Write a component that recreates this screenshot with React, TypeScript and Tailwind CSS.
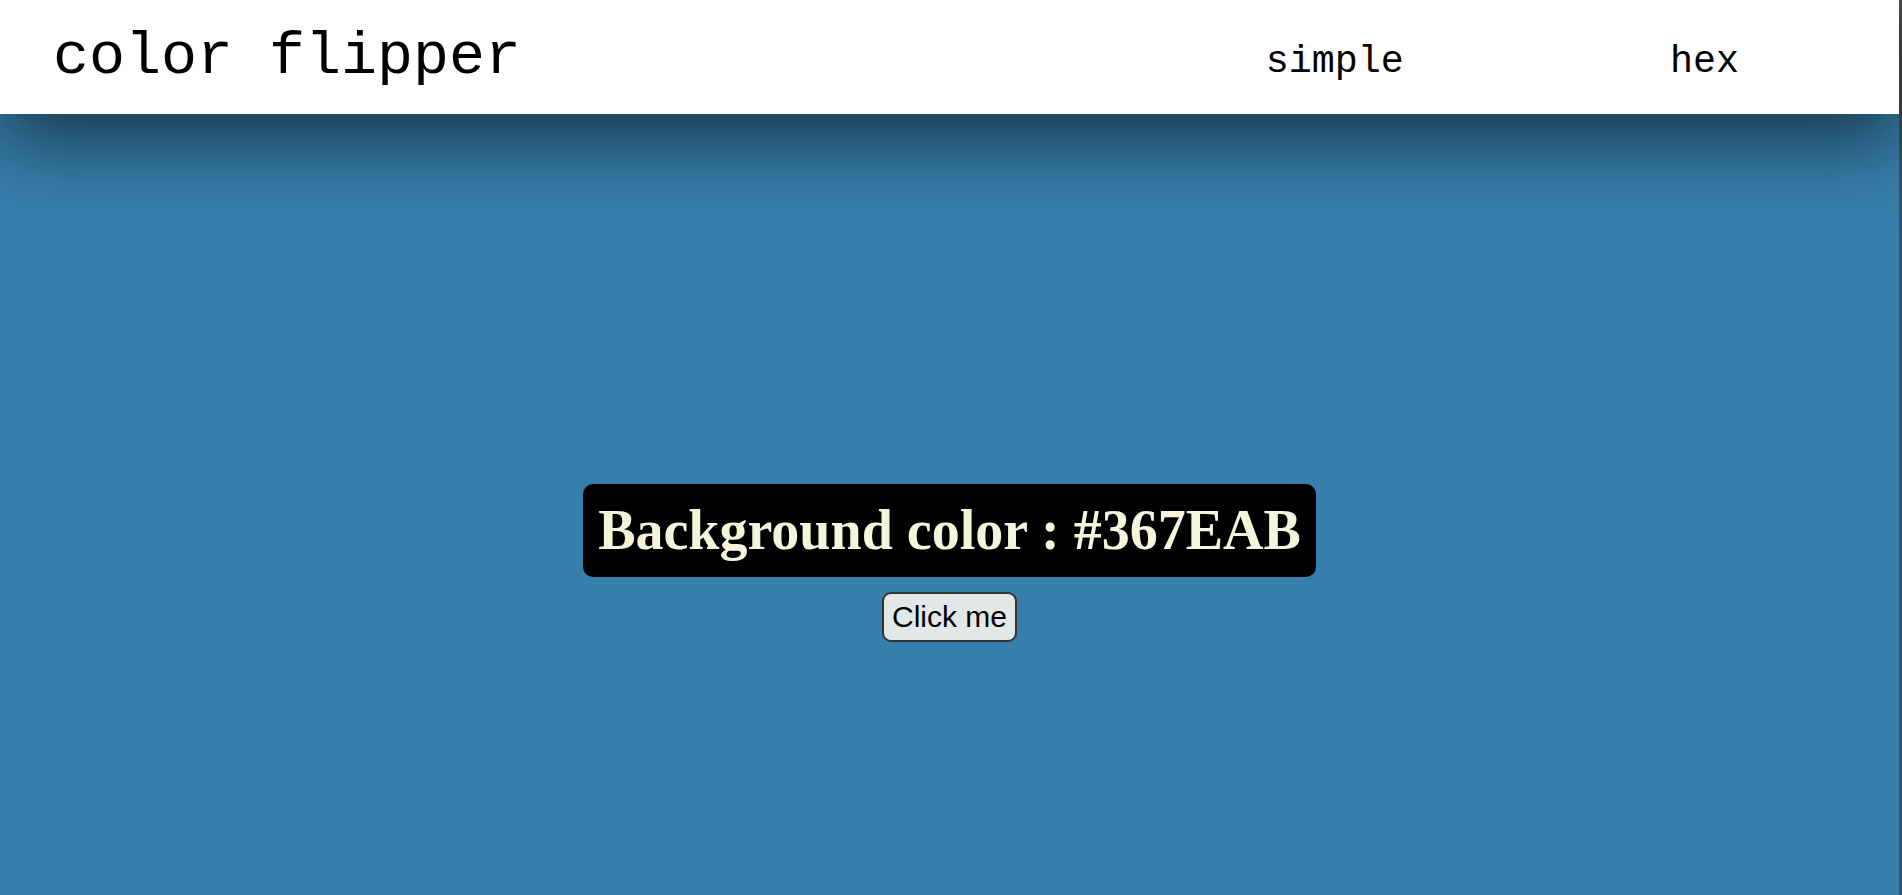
import React, { useState } from "react";

const HEX_DIGITS = "0123456789ABCDEF";

const randomHex = () => {
  let hex = "#";
  for (let i = 0; i < 6; i++) {
    hex += HEX_DIGITS[Math.floor(Math.random() * 16)];
  }
  return hex;
};

const Navbar = () => {
  return (
    <nav className="relative z-10 flex h-[114px] shrink-0 items-center justify-between bg-white pl-[53px] pr-[160px] shadow-[0_24px_80px_rgba(0,0,0,0.6)]">
      <h1 className="font-['Liberation_Mono',_'Courier_New',_monospace] text-[60px] leading-none font-normal text-black">
        color flipper
      </h1>
      <ul className="mt-[10px] flex gap-[266px] font-['Liberation_Mono',_'Courier_New',_monospace] text-[38.4px] leading-none text-black">
        <li>
          <a href="#">simple</a>
        </li>
        <li>
          <a href="#">hex</a>
        </li>
      </ul>
    </nav>
  );
};

const App = () => {
  const [color, setColor] = useState("#367EAB");

  return (
    <div className="flex h-[895px] overflow-hidden">
      <div className="flex flex-1 flex-col">
        <Navbar />
        <main
          className="flex h-[895px] shrink-0 flex-col items-center justify-center gap-[15px] pt-[3px]"
          style={{ backgroundColor: color }}
        >
          <h2 className="rounded-[10px] bg-black p-[15px] font-['Liberation_Serif',_'Times_New_Roman',_serif] text-[56px] leading-[63px] font-bold text-[#F5F5DC]">
            Background color : {color}
          </h2>
          <button
            onClick={() => setColor(randomHex())}
            className="rounded-[9px] border-2 border-[#333] bg-[#e3e8e7] px-[8px] py-[6px] font-['Liberation_Sans',_Arial,_sans-serif] text-[30px] leading-[34px] text-black"
          >
            Click me
          </button>
        </main>
      </div>
      <div className="w-[3px] shrink-0 bg-[#4d4d4d]" />
    </div>
  );
};

export default App;
